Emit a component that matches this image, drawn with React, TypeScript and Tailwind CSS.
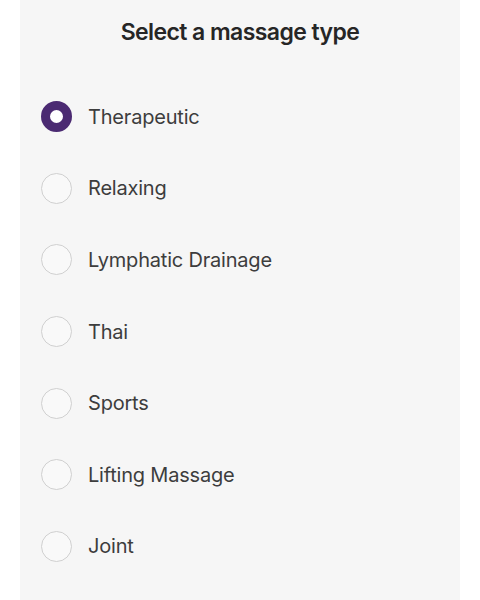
import React, { useState } from 'react'

const types = ['Therapeutic', 'Relaxing', 'Lymphatic Drainage', 'Thai', 'Sports', 'Lifting Massage', 'Joint']

const App: React.FC = () => {
    const [selected, setSelected] = useState('Therapeutic')

    return (
        <div className="min-h-screen bg-white" style={{ fontFamily: 'Inter, "Noto Sans", sans-serif' }}>
            <div className="mx-[20px] w-[440px] h-[600px] overflow-hidden bg-[#f6f6f6]">
                <h1 className="pt-[18px] h-[46px] text-center text-[23px] leading-[28px] font-semibold tracking-[-0.025em] text-[#262626]">
                    Select a massage type
                </h1>

                <div className="mt-[35px] flex flex-col">
                    {types.map((t) => (
                        <label
                            key={t}
                            onClick={() => setSelected(t)}
                            className="h-[71.6px] flex items-center gap-[16px] pl-[21px] cursor-pointer"
                        >
                            {selected === t ? (
                                <span className="w-[31px] h-[31px] rounded-full border-[9px] border-[#4b2a72] bg-white shrink-0" />
                            ) : (
                                <span className="w-[31px] h-[31px] rounded-full border-[1.5px] border-[#d0d0d0] bg-[#f9f9f9] shrink-0" />
                            )}
                            <span className="text-[20px] tracking-[-0.01em] text-[#3d3d3d]">{t}</span>
                        </label>
                    ))}
                </div>
            </div>
        </div>
    )
}

export default App
